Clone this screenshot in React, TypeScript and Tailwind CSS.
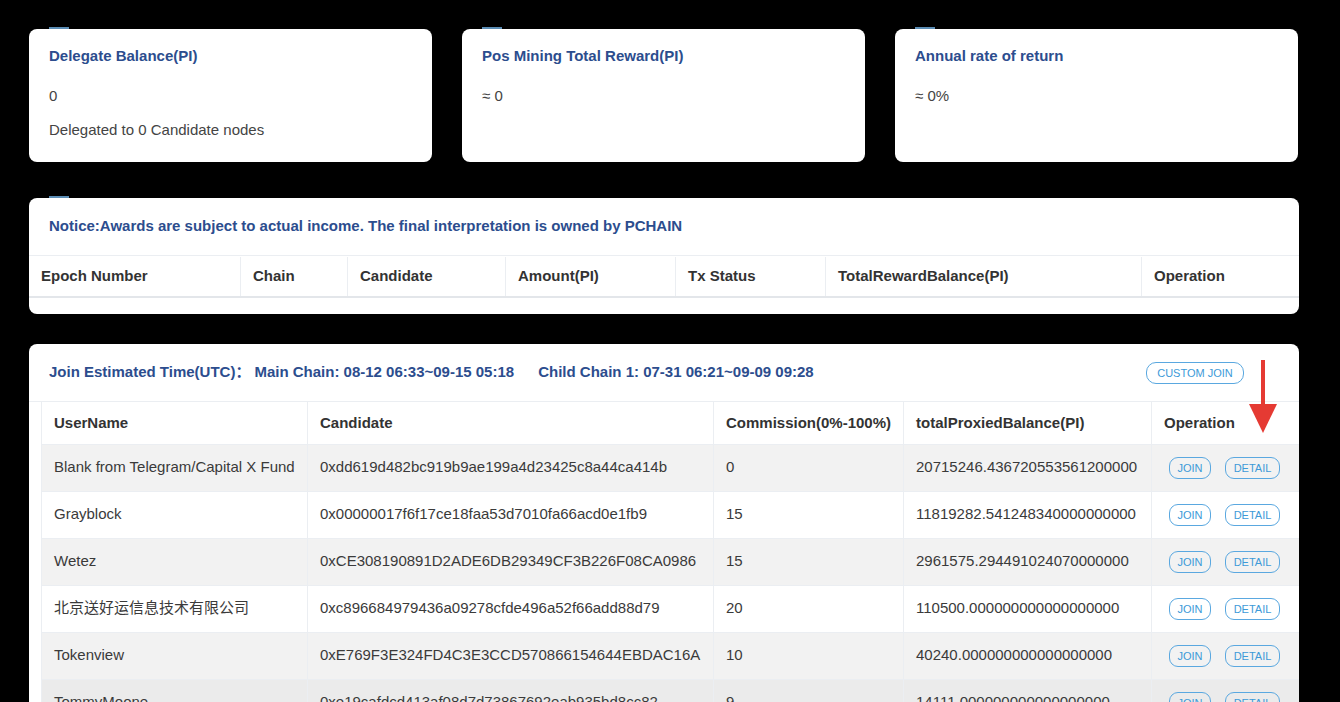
import React from "react";

const summaryCards = [
  { title: "Delegate Balance(PI)", lines: ["0", "Delegated to 0 Candidate nodes"] },
  { title: "Pos Mining Total Reward(PI)", lines: ["≈ 0"] },
  { title: "Annual rate of return", lines: ["≈ 0%"] },
];

const rewardCols = [
  { label: "Epoch Number", w: "w-[212px]" },
  { label: "Chain", w: "w-[107px]" },
  { label: "Candidate", w: "w-[158px]" },
  { label: "Amount(PI)", w: "w-[170px]" },
  { label: "Tx Status", w: "w-[150px]" },
  { label: "TotalRewardBalance(PI)", w: "w-[316px]" },
  { label: "Operation", w: "w-[157px]" },
];

const nodes = [
  { name: "Blank from Telegram/Capital X Fund", addr: "0xdd619d482bc919b9ae199a4d23425c8a44ca414b", fee: "0", bal: "20715246.436720553561200000" },
  { name: "Grayblock", addr: "0x00000017f6f17ce18faa53d7010fa66acd0e1fb9", fee: "15", bal: "11819282.541248340000000000" },
  { name: "Wetez", addr: "0xCE308190891D2ADE6DB29349CF3B226F08CA0986", fee: "15", bal: "2961575.294491024070000000" },
  { name: "北京送好运信息技术有限公司", addr: "0xc896684979436a09278cfde496a52f66add88d79", fee: "20", bal: "110500.000000000000000000" },
  { name: "Tokenview", addr: "0xE769F3E324FD4C3E3CCD570866154644EBDAC16A", fee: "10", bal: "40240.000000000000000000" },
  { name: "TommyMoone", addr: "0xe19cafdcd413af08d7d73867692eab935bd8cc82", fee: "9", bal: "14111.000000000000000000" },
];

function Tab() {
  return <div className="absolute -top-[2px] left-[20px] h-[2px] w-[20px] bg-[#5b8db5]" />;
}

function PillButton({ label, className }: { label: string; className?: string }) {
  return (
    <button
      className={`h-[22px] rounded-[9px] border border-[#5aa8e0] text-[11px] font-normal leading-[20px] text-[#3d9ad8] ${className ?? ""}`}
    >
      {label}
    </button>
  );
}

export default function App() {
  return (
    <div className="h-[702px] w-[1340px] overflow-hidden bg-black font-['Liberation_Sans','Noto_Sans_CJK_SC',sans-serif] text-[#333]">
      <div className="ml-[29px] w-[1270px] pt-[29px]">
        <div className="flex gap-[30px]">
          {summaryCards.map((c) => (
            <div key={c.title} className="relative h-[133px] w-[403px] rounded-[8px] bg-white px-[20px] pt-[17px]">
              <Tab />
              <div className="text-[15px] font-bold leading-[20px] text-[#2c4d8e]">{c.title}</div>
              <div className="mt-[20px] text-[15px] leading-[20px] text-[#444]">{c.lines[0]}</div>
              {c.lines[1] && <div className="mt-[14px] text-[15px] leading-[20px] text-[#444]">{c.lines[1]}</div>}
            </div>
          ))}
        </div>

        <div className="relative mt-[36px] h-[116px] rounded-[8px] bg-white">
          <Tab />
          <div className="flex h-[57px] items-center px-[20px] text-[15px] font-bold text-[#2c4d8e]">
            Notice:Awards are subject to actual income. The final interpretation is owned by PCHAIN
          </div>
          <div className="flex h-[43px] border-y border-b-2 border-t-[#ebeef2] border-b-[#e3e6ea] pt-[1px]">
            {rewardCols.map((c, i) => (
              <div
                key={c.label}
                className={`${c.w} flex items-center px-[12px] text-[15px] font-bold text-[#333] ${i < rewardCols.length - 1 ? "border-r border-[#ebeef2]" : ""}`}
              >
                {c.label}
              </div>
            ))}
          </div>
        </div>

        <div className="relative mt-[30px] h-[400px] overflow-hidden rounded-t-[8px] bg-white">
          <Tab />
          <div className="flex h-[57px] items-center px-[20px] text-[15px] font-bold text-[#2c4d8e]">
            <span>Join Estimated Time(UTC)：</span>
            <span className="ml-[4px]">Main Chain: 08-12 06:33~09-15 05:18</span>
            <span className="ml-[24px]">Child Chain 1: 07-31 06:21~09-09 09:28</span>
            <PillButton label="CUSTOM JOIN" className="ml-auto mr-[35px] w-[98px] rounded-[10px]" />
          </div>
          <div className="border-t border-[#ebeef2] pl-[12px]">
            <table className="w-[1270px] table-fixed border-collapse text-left">
              <colgroup>
                <col className="w-[266px]" />
                <col className="w-[406px]" />
                <col className="w-[190px]" />
                <col className="w-[248px]" />
                <col className="w-[160px]" />
              </colgroup>
              <thead>
                <tr className="h-[42px]">
                  {["UserName", "Candidate", "Commission(0%-100%)", "totalProxiedBalance(PI)", "Operation"].map((h) => (
                    <th key={h} className="border-x border-b border-[#ebeef2] px-[12px] text-[15px] font-bold">
                      {h}
                    </th>
                  ))}
                </tr>
              </thead>
              <tbody>
                {nodes.map((n, i) => (
                  <tr
                    key={n.addr}
                    className={`h-[47px] text-[15px] text-[#3a3a3a] ${i === 5 ? "bg-[#ebebeb]" : i % 2 === 0 ? "bg-[#f2f2f2]" : "bg-white"}`}
                  >
                    <td className="border-x border-b border-[#ebeef2] px-[12px]">{n.name}</td>
                    <td className="border-x border-b border-[#ebeef2] px-[12px]">{n.addr}</td>
                    <td className="border-x border-b border-[#ebeef2] px-[12px]">{n.fee}</td>
                    <td className="border-x border-b border-[#ebeef2] px-[12px]">{n.bal}</td>
                    <td className="border-x border-b border-[#ebeef2] px-[17px]">
                      <div className="flex gap-[14px]">
                        <PillButton label="JOIN" className="w-[42px]" />
                        <PillButton label="DETAIL" className="w-[55px]" />
                      </div>
                    </td>
                  </tr>
                ))}
              </tbody>
            </table>
          </div>

          <svg className="absolute left-[1219px] top-[16px]" width="30" height="74" viewBox="0 0 30 74">
            <line x1="15" y1="0" x2="15" y2="48" stroke="#e53a33" strokeWidth="4" />
            <polygon points="1,44 29,44 15,73" fill="#e53a33" />
          </svg>
        </div>
      </div>
    </div>
  );
}
